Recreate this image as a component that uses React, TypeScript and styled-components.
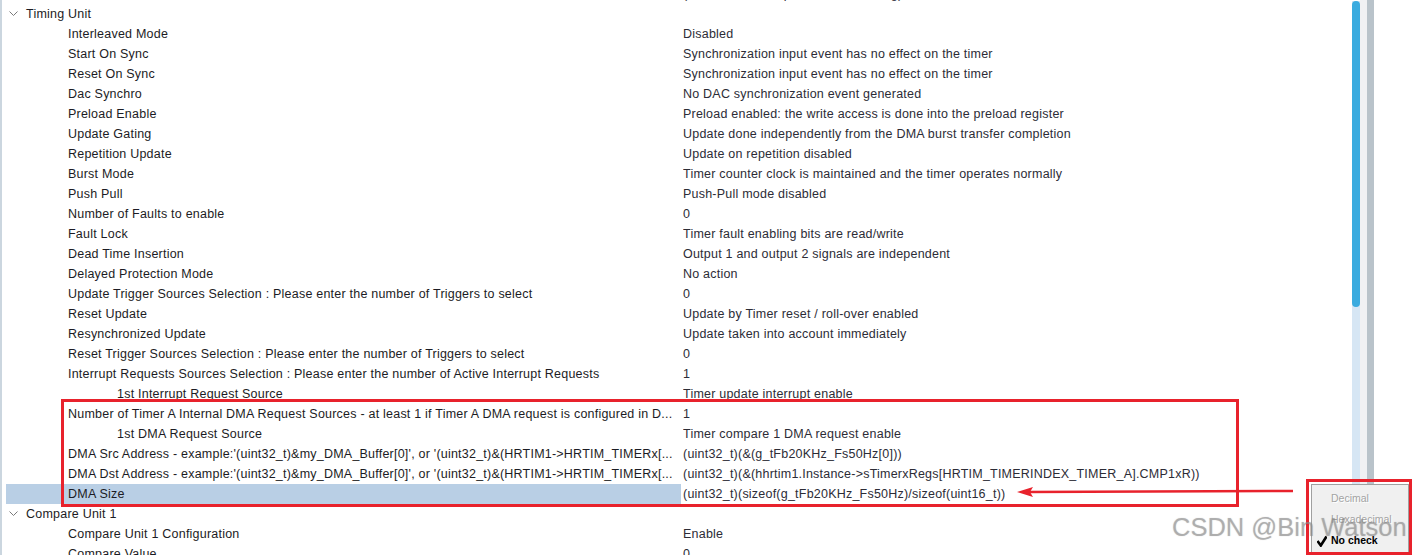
import React from 'react';
import styled, { createGlobalStyle } from 'styled-components';

const GlobalStyle = createGlobalStyle`
  html, body {
    margin: 0;
    padding: 0;
    background: #ffffff;
  }
  body {
    font-family: 'Liberation Sans', Arial, sans-serif;
  }
`;

type RowData = {
  label: string;
  value?: string;
  level: 0 | 1 | 2;
  header?: boolean;
  selected?: boolean;
};

const rows: RowData[] = [
  { label: '', value: '(Timer A event in period, not counting)', level: 1 },
  { label: 'Timing Unit', level: 0, header: true },
  { label: 'Interleaved Mode', value: 'Disabled', level: 1 },
  { label: 'Start On Sync', value: 'Synchronization input event has no effect on the timer', level: 1 },
  { label: 'Reset On Sync', value: 'Synchronization input event has no effect on the timer', level: 1 },
  { label: 'Dac Synchro', value: 'No DAC synchronization event generated', level: 1 },
  { label: 'Preload Enable', value: 'Preload enabled: the write access is done into the preload register', level: 1 },
  { label: 'Update Gating', value: 'Update done independently from the DMA burst transfer completion', level: 1 },
  { label: 'Repetition Update', value: 'Update on repetition disabled', level: 1 },
  { label: 'Burst Mode', value: 'Timer counter clock is maintained and the timer operates normally', level: 1 },
  { label: 'Push Pull', value: 'Push-Pull mode disabled', level: 1 },
  { label: 'Number of Faults to enable', value: '0', level: 1 },
  { label: 'Fault Lock', value: 'Timer fault enabling bits are read/write', level: 1 },
  { label: 'Dead Time Insertion', value: 'Output 1 and output 2 signals are independent', level: 1 },
  { label: 'Delayed Protection Mode', value: 'No action', level: 1 },
  { label: 'Update Trigger Sources Selection : Please enter the number of Triggers to select', value: '0', level: 1 },
  { label: 'Reset Update', value: 'Update by Timer reset / roll-over enabled', level: 1 },
  { label: 'Resynchronized Update', value: 'Update taken into account immediately', level: 1 },
  { label: 'Reset Trigger Sources Selection : Please enter the number of Triggers to select', value: '0', level: 1 },
  { label: 'Interrupt Requests Sources Selection : Please enter the number of Active Interrupt Requests', value: '1', level: 1 },
  { label: '1st Interrupt Request Source', value: 'Timer update interrupt enable', level: 2 },
  { label: 'Number of Timer A Internal DMA Request Sources - at least 1 if Timer A DMA request is configured in D...', value: '1', level: 1 },
  { label: '1st DMA Request Source', value: 'Timer compare 1 DMA request enable', level: 2 },
  { label: "DMA Src Address - example:'(uint32_t)&my_DMA_Buffer[0]', or '(uint32_t)&(HRTIM1->HRTIM_TIMERx[...", value: '(uint32_t)(&(g_tFb20KHz_Fs50Hz[0]))', level: 1 },
  { label: "DMA Dst Address - example:'(uint32_t)&my_DMA_Buffer[0]', or '(uint32_t)&(HRTIM1->HRTIM_TIMERx[...", value: '(uint32_t)(&(hhrtim1.Instance->sTimerxRegs[HRTIM_TIMERINDEX_TIMER_A].CMP1xR))', level: 1 },
  { label: 'DMA Size', value: '(uint32_t)(sizeof(g_tFb20KHz_Fs50Hz)/sizeof(uint16_t))', level: 1, selected: true },
  { label: 'Compare Unit 1', level: 0, header: true },
  { label: 'Compare Unit 1 Configuration', value: 'Enable', level: 1 },
  { label: 'Compare Value', value: '0', level: 1 },
];

const indent: Record<number, number> = { 0: 3, 1: 62, 2: 111 };

const Screen = styled.div`
  position: relative;
  display: flex;
  width: 100vw;
  height: 555px;
  overflow: hidden;
  background: #ffffff;
`;

const LeftEdge = styled.div`
  width: 2px;
  flex: none;
  background: #cbd6df;
`;

const TreeList = styled.div`
  flex: 1;
  display: flex;
  flex-direction: column;
  margin-top: -16px;
  padding-left: 4px;
`;

const Row = styled.div`
  display: grid;
  grid-template-columns: 675px 1fr;
  column-gap: 2px;
  height: 20px;
  flex: none;
  font-size: 12.5px;
  letter-spacing: 0.22px;
  line-height: 20px;
`;

const LabelCell = styled.div<{ $level: number; $selected?: boolean }>`
  display: flex;
  align-items: center;
  padding-left: ${({ $level }) => indent[$level]}px;
  background: ${({ $selected }) => ($selected ? '#b9cfe5' : 'transparent')};
  color: #1c1c24;
  white-space: nowrap;
  overflow: hidden;
`;

const ValueCell = styled.div`
  color: #2c2c36;
  white-space: nowrap;
  overflow: hidden;
`;

const Chevron = styled.svg`
  width: 9px;
  height: 6px;
  margin-right: 8px;
  flex: none;
`;

const ScrollArea = styled.div`
  width: 61px;
  flex: none;
  display: flex;
  padding-left: 5px;
`;

const Track = styled.div`
  width: 8px;
  display: flex;
  flex-direction: column;
  background: #d6e6f4;
  padding-top: 1px;
  background-clip: content-box;
`;

const Thumb = styled.div`
  height: 306px;
  background: #3aabdf;
  border-radius: 4px;
`;

const TrackGap = styled.div`
  width: 7px;
  background: #f0f1f3;
`;

const SideBar = styled.div`
  width: 7px;
  background: #b9c3ca;
`;

/* annotations drawn over the screenshot */
const RedFrame = styled.div<{ $l: number; $t: number; $w: number; $h: number }>`
  position: absolute;
  left: ${({ $l }) => $l}px;
  top: ${({ $t }) => $t}px;
  width: ${({ $w }) => $w}px;
  height: ${({ $h }) => $h}px;
  border: 3px solid #e8222c;
  box-sizing: border-box;
  pointer-events: none;
`;

const Arrow = styled.svg`
  position: absolute;
  left: 1015px;
  top: 485px;
  width: 280px;
  height: 14px;
`;

const Menu = styled.div`
  position: absolute;
  left: 1311px;
  top: 484px;
  width: 98px;
  height: 80px;
  box-sizing: border-box;
  background: #f0f0f0;
  border: 1px solid #a0a0a0;
  padding-top: 3px;
  display: flex;
  flex-direction: column;
  font-family: 'Liberation Sans', Arial, sans-serif;
  font-size: 10.5px;
`;

const MenuItem = styled.div<{ $disabled?: boolean; $checked?: boolean }>`
  position: relative;
  height: 21px;
  line-height: 21px;
  padding-left: 19px;
  color: ${({ $disabled }) => ($disabled ? '#a3a3a3' : '#000000')};
  font-weight: ${({ $checked }) => ($checked ? 700 : 400)};
  text-shadow: ${({ $disabled }) => ($disabled ? '1px 1px 0 #ffffff' : 'none')};
`;

const Check = styled.svg`
  position: absolute;
  left: 5px;
  top: 5px;
  width: 10px;
  height: 12px;
`;

const Watermark = styled.div`
  position: absolute;
  left: 1172px;
  top: 511px;
  font-family: 'Liberation Sans', Arial, sans-serif;
  font-size: 25.5px;
  line-height: 32px;
  white-space: nowrap;
  color: rgba(150, 150, 150, 0.55);
  text-shadow: 0 0 1px rgba(90, 90, 90, 0.35);
  pointer-events: none;
`;

const TreeRow: React.FC<{ row: RowData }> = ({ row }) => (
  <Row>
    <LabelCell $level={row.level} $selected={row.selected}>
      {row.header && (
        <Chevron viewBox="0 0 9 6">
          <polyline points="0.5,0.5 4.5,4.5 8.5,0.5" fill="none" stroke="#7a7a7a" strokeWidth="1" />
        </Chevron>
      )}
      {row.label}
    </LabelCell>
    <ValueCell>{row.value}</ValueCell>
  </Row>
);

export default function App() {
  return (
    <>
      <GlobalStyle />
      <Screen>
        <LeftEdge />
        <TreeList>
          {rows.map((r, i) => (
            <TreeRow key={i} row={r} />
          ))}
        </TreeList>
        <ScrollArea>
          <Track>
            <Thumb />
          </Track>
          <TrackGap />
          <SideBar />
        </ScrollArea>

        <RedFrame $l={61} $t={399} $w={1178} $h={108} />
        <Arrow viewBox="0 0 280 14">
          <line x1="12" y1="7" x2="278" y2="6" stroke="#e8222c" strokeWidth="2.5" />
          <polygon points="2,7 18,2 15,7 18,12" fill="#e8222c" />
        </Arrow>

        <Menu>
          <MenuItem $disabled>Decimal</MenuItem>
          <MenuItem $disabled>Hexadecimal</MenuItem>
          <MenuItem $checked>
            <Check viewBox="0 0 10 12">
              <path d="M0.5 6 L3.8 10.5 L9.5 1.5" fill="none" stroke="#000" strokeWidth="2.6" />
            </Check>
            No check
          </MenuItem>
        </Menu>
        <RedFrame $l={1306} $t={479} $w={106} $h={76} />
        <Watermark>CSDN @Bin Watson</Watermark>
      </Screen>
    </>
  );
}
